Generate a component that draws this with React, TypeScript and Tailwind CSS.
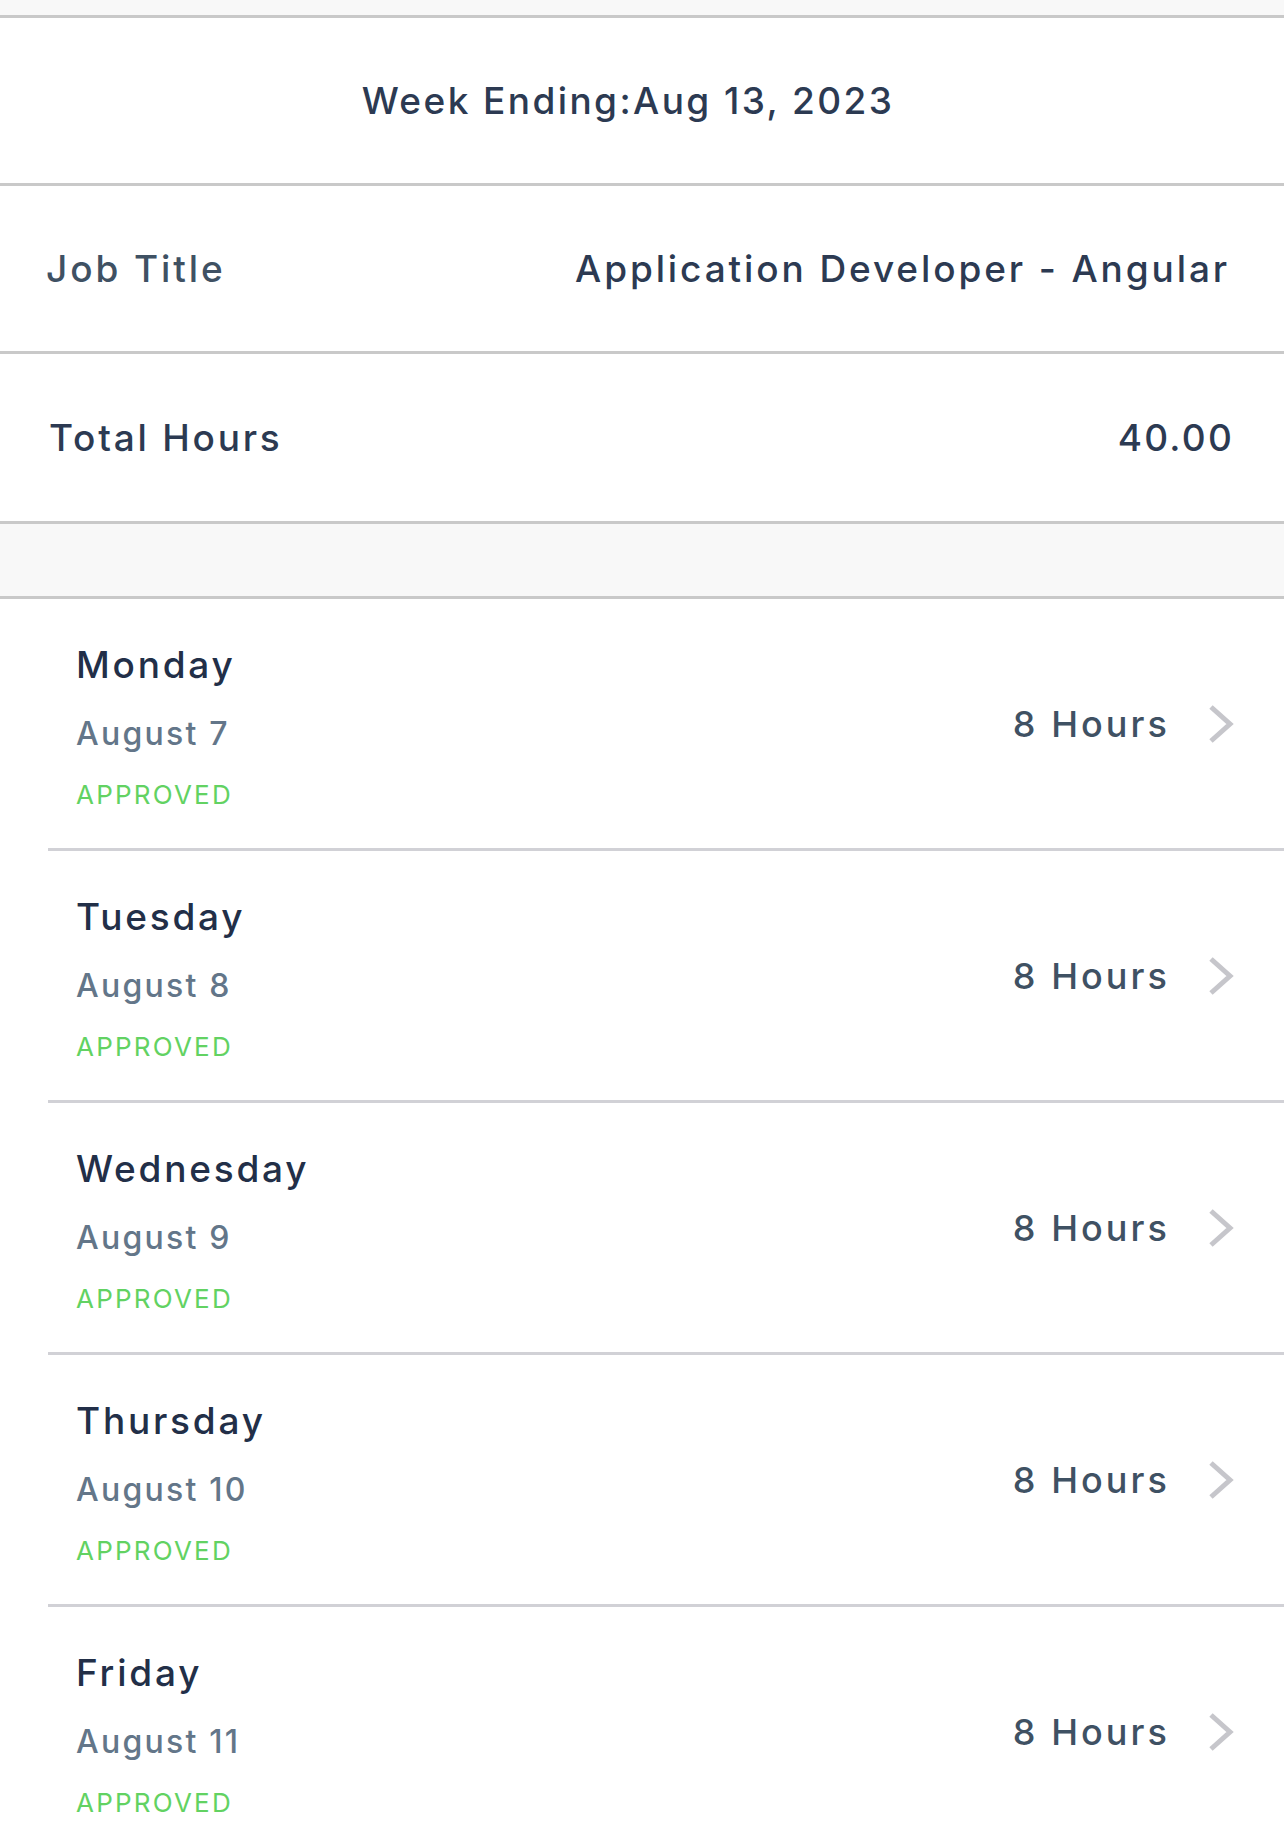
import React from "react";

const days = [
  { day: "Monday", date: "August 7" },
  { day: "Tuesday", date: "August 8" },
  { day: "Wednesday", date: "August 9" },
  { day: "Thursday", date: "August 10" },
  { day: "Friday", date: "August 11" },
];

function Chevron() {
  return (
    <svg width="26" height="40" viewBox="0 0 26 40" className="shrink-0">
      <polyline points="3,3 22,20 3,37" fill="none" stroke="#c6c6cb" strokeWidth="5" />
    </svg>
  );
}

export default function App() {
  return (
    <div className="w-full min-h-[1827px] bg-white font-['Inter',sans-serif] font-medium">
      <div className="h-[15px] bg-[#f8f8f8] border-b-[3px] border-[#c9c9c9] box-content" />
      <div className="h-[165px] flex items-center justify-center border-b-[3px] border-[#c9c9c9] box-content pr-[28px]">
        <span className="text-[37px] tracking-[0.065em] text-[#2c3a52]">Week Ending:Aug 13, 2023</span>
      </div>
      <div className="h-[165px] flex items-center justify-between pl-[46px] pr-[54px] border-b-[3px] border-[#c9c9c9] box-content">
        <span className="text-[37px] tracking-[0.078em] text-[#3f5163]">Job Title</span>
        <span className="text-[37px] tracking-[0.078em] text-[#2c3a52]">Application Developer - Angular</span>
      </div>
      <div className="h-[167px] flex items-center justify-between pl-[49px] pr-[50px] border-b-[3px] border-[#c9c9c9] box-content">
        <span className="text-[37px] tracking-[0.075em] text-[#2c3a52]">Total Hours</span>
        <span className="text-[37px] tracking-[0.06em] text-[#2c3a52]">40.00</span>
      </div>
      <div className="h-[72px] bg-[#f8f8f8] border-b-[3px] border-[#c9c9c9] box-content" />
      {days.map((d) => (
        <div key={d.day} className="ml-[48px] border-b-[3px] border-[#d1d1d6]">
          <div className="h-[249px] flex items-center justify-between pl-[28px] pr-[50px]">
            <div className="flex flex-col pt-[4px]">
              <span className="text-[37px] leading-[46px] tracking-[0.075em] text-[#222f48]">{d.day}</span>
              <span className="mt-[26px] text-[32px] leading-[40px] tracking-[0.07em] text-[#637689]">{d.date}</span>
              <span className="mt-[26px] text-[26px] leading-[30px] tracking-[0.085em] font-normal text-[#62d262]">APPROVED</span>
            </div>
            <div className="flex items-center gap-[38px]">
              <span className="text-[36px] tracking-[0.085em] text-[#3f5163]">8 Hours</span>
              <Chevron />
            </div>
          </div>
        </div>
      ))}
    </div>
  );
}
